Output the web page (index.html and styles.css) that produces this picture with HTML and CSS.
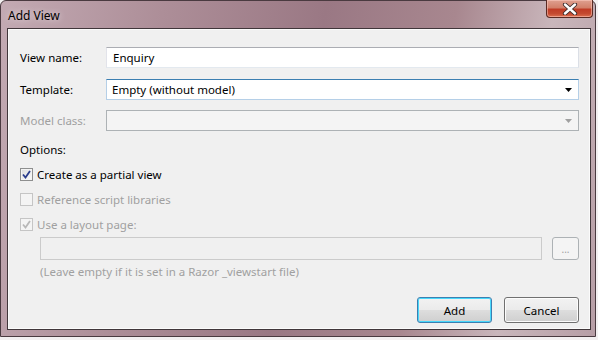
FILE: index.html
```html
<!DOCTYPE html>
<html>
<head>
<meta charset="utf-8">
<link rel="stylesheet" href="styles.css">
</head>
<body>
<div class="window">
  <div class="titlebar">
    <span class="title">Add View</span>
    <div class="close">
      <svg width="16" height="12" viewBox="0 0 16 12">
        <path d="M3 1.5 L13 10.5 M13 1.5 L3 10.5" stroke="#3a2a2a" stroke-width="4.2" stroke-linecap="round"/>
        <path d="M3 1.5 L13 10.5 M13 1.5 L3 10.5" stroke="#ffffff" stroke-width="2.4" stroke-linecap="round"/>
      </svg>
    </div>
  </div>
  <div class="client">
    <div class="row">
      <label class="lbl">View name:</label>
      <div class="textbox">Enquiry</div>
    </div>
    <div class="row r2">
      <label class="lbl">Template:</label>
      <div class="combo focus">
        <span>Empty (without model)</span>
        <svg class="arrow" width="7" height="4" viewBox="0 0 7 4"><path d="M0 0 H7 L3.5 4 Z" fill="#000"/></svg>
      </div>
    </div>
    <div class="row r3">
      <label class="lbl dis">Model class:</label>
      <div class="combo disabled">
        <span></span>
        <svg class="arrow" width="7" height="4" viewBox="0 0 7 4"><path d="M0 0 H7 L3.5 4 Z" fill="#a0a0a0"/></svg>
      </div>
    </div>
    <div class="options">Options:</div>
    <div class="check c1">
      <span class="box on">
        <svg width="9" height="9" viewBox="0 0 9 9"><path d="M1 4.5 L3.5 7.5 L8 1" stroke="#2a3c8c" stroke-width="1.8" fill="none"/></svg>
      </span>
      <span>Create as a partial view</span>
    </div>
    <div class="check c2 dis">
      <span class="box off"></span>
      <span>Reference script libraries</span>
    </div>
    <div class="check c3 dis">
      <span class="box off">
        <svg width="9" height="9" viewBox="0 0 9 9"><path d="M1 4.5 L3.5 7.5 L8 1" stroke="#b8b8b8" stroke-width="1.8" fill="none"/></svg>
      </span>
      <span>Use a layout page:</span>
    </div>
    <div class="layoutrow">
      <div class="textbox disabledbox"></div>
      <div class="browse">...</div>
    </div>
    <div class="note">(Leave empty if it is set in a Razor _viewstart file)</div>
    <div class="buttons">
      <div class="btn default">Add</div>
      <div class="btn">Cancel</div>
    </div>
  </div>
</div>
</body>
</html>
```
FILE: styles.css
```css
html, body {
  margin: 0;
  padding: 0;
  background: #f3f0f1;
}
body {
  width: 598px;
  height: 340px;
  overflow: hidden;
  font-family: "Segoe UI", "Noto Sans", "Open Sans", sans-serif;
  font-size: 11.5px;
  color: #000;
}
.window {
  width: 596px;
  height: 337px;
  box-sizing: border-box;
  border: 1px solid #4a3a40;
  border-radius: 6px 6px 0 0;
  background: linear-gradient(100deg, #c3aab3 0%, #ad8e98 25%, #9a7884 50%, #a8878f 70%, #c9b6bb 85%, #b79ea6 100%);
  display: flex;
  flex-direction: column;
  position: relative;
}
.titlebar {
  height: 27px;
  display: flex;
  align-items: center;
  position: relative;
}
.title {
  margin-left: 7px;
  margin-top: 1px;
  font-size: 12px;
  color: #000;
  text-shadow: 0 0 6px rgba(255,255,255,0.7);
}
.close {
  position: absolute;
  right: 2px;
  top: -1px;
  width: 47px;
  height: 18px;
  box-sizing: border-box;
  border: 1px solid #5a2a22;
  border-top: none;
  border-radius: 0 0 4px 4px;
  background: linear-gradient(#dfa090 0%, #d2806a 45%, #c03c26 55%, #c44a30 80%, #dc7050 100%);
  display: flex;
  align-items: center;
  justify-content: center;
  box-shadow: inset 0 0 0 1px rgba(255,210,200,0.5);
}
.client {
  margin: 0 4px 6px 6px;
  flex: 1;
  background: #f0f0f0;
  border: 1px solid #40363a;
  box-shadow: inset 0 0 0 1px #fbfbfb;
  padding: 0 11px 0 12px;
  display: flex;
  flex-direction: column;
}
.row {
  display: flex;
  align-items: center;
  height: 21px;
  margin-top: 18px;
}
.row.r2 { margin-top: 11px; }
.row.r3 { margin-top: 10px; }
.lbl {
  width: 86px;
  flex: none;
}
.dis { color: #a0a0a0; }
.textbox {
  flex: 1;
  height: 21px;
  box-sizing: border-box;
  background: #fff;
  border: 1px solid;
  border-color: #abadb3 #dbdfe6 #e3e9ef #e2e3ea;
  padding: 0 6px;
  display: flex;
  align-items: center;
}
.combo {
  flex: 1;
  height: 21px;
  box-sizing: border-box;
  border: 1px solid #acacac;
  padding: 0 6px 0 5px;
  display: flex;
  align-items: center;
  justify-content: space-between;
}
.combo.focus {
  background: #fff;
  border-color: #3c7fb1 #b5cfe7 #b5cfe7 #b5cfe7;
}
.combo.disabled {
  background: #f4f4f4;
  border-color: #adb2b5;
}
.options {
  margin-top: 11px;
  height: 16px;
  line-height: 16px;
}
.check {
  display: flex;
  align-items: center;
  height: 16px;
  gap: 4px;
}
.c1 { margin-top: 8px; }
.c2 { margin-top: 9px; }
.c3 { margin-top: 9px; }
.box {
  width: 13px;
  height: 13px;
  box-sizing: border-box;
  display: flex;
  align-items: center;
  justify-content: center;
  flex: none;
}
.box.on {
  border: 1px solid #8e8f8f;
  background: linear-gradient(135deg, #dcdcdc, #fbfbfb);
  box-shadow: inset 0 0 0 1px #f4f4f4;
}
.box.off {
  border: 1px solid #c5c5c5;
  background: #f4f4f4;
}
.layoutrow {
  display: flex;
  margin-top: 5px;
  margin-left: 20px;
  height: 23px;
  gap: 10px;
}
.disabledbox {
  background: #f0f0f0;
  border: 1px solid #cbcbcb;
  height: 23px;
}
.browse {
  width: 27px;
  height: 23px;
  box-sizing: border-box;
  border: 1px solid #adb2b5;
  border-radius: 3px;
  background: #f4f4f4;
  color: #a0a0a0;
  font-size: 10px;
  display: flex;
  align-items: center;
  justify-content: center;
}
.note {
  margin-top: 4px;
  margin-left: 20px;
  color: #a0a0a0;
  height: 16px;
  line-height: 16px;
}
.buttons {
  margin-top: 17px;
  display: flex;
  justify-content: flex-end;
  gap: 12px;
}
.btn {
  width: 75px;
  height: 26px;
  box-sizing: border-box;
  border: 1px solid #707070;
  border-radius: 3px;
  background: linear-gradient(#f2f2f2 0%, #ebebeb 48%, #dddddd 52%, #cfcfcf 100%);
  box-shadow: inset 0 0 0 1px #fcfcfc;
  display: flex;
  align-items: center;
  justify-content: center;
}
.btn.default {
  border-color: #3c7fb1;
  box-shadow: inset 0 0 0 1px #48d8fb;
}
```
